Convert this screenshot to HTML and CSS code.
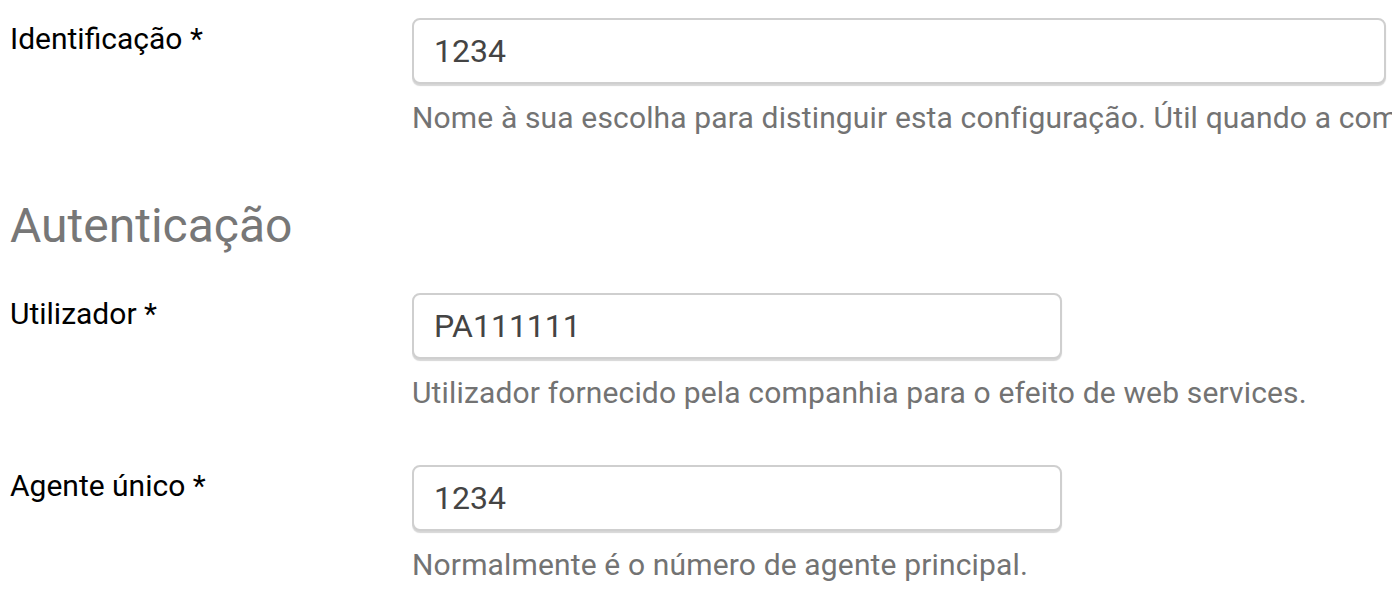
FILE: index.html
```html
<!DOCTYPE html>
<html lang="pt">
<head>
<meta charset="utf-8">
<link rel="stylesheet" href="styles.css">
</head>
<body>
<form class="form">
  <div class="row">
    <label class="label">Identificação *</label>
    <div class="field">
      <input class="input input-wide" type="text" value="1234">
      <p class="help">Nome à sua escolha para distinguir esta configuração. Útil quando a companhia tem várias configurações.</p>
    </div>
  </div>
  <h2 class="section">Autenticação</h2>
  <div class="row">
    <label class="label">Utilizador *</label>
    <div class="field">
      <input class="input" type="text" value="PA111111">
      <p class="help">Utilizador fornecido pela companhia para o efeito de web services.</p>
    </div>
  </div>
  <div class="row">
    <label class="label">Agente único *</label>
    <div class="field">
      <input class="input" type="text" value="1234">
      <p class="help">Normalmente é o número de agente principal.</p>
    </div>
  </div>
</form>
</body>
</html>
```
FILE: styles.css
```css
html, body {
  margin: 0;
  padding: 0;
  background: #fff;
  overflow: hidden;
}
body {
  font-family: Roboto, "Liberation Sans", sans-serif;
  width: 1392px;
  height: 612px;
}
.form {
  padding: 18px 0 0 10px;
}
.row {
  display: flex;
  align-items: flex-start;
  margin-bottom: 52px;
}
.label {
  width: 402px;
  flex: none;
  font-size: 30px;
  line-height: 42px;
  color: #000;
}
.field {
  flex: none;
  width: 980px;
  white-space: nowrap;
  overflow: hidden;
}
.input {
  display: block;
  box-sizing: border-box;
  width: 650px;
  height: 66px;
  margin-bottom: 2px;
  padding: 0 20px;
  border: 2px solid #cfcfcf;
  border-radius: 8px;
  box-shadow: 0 2px 1px #d6d6d6;
  font-family: Roboto, "Liberation Sans", sans-serif;
  font-size: 32px;
  color: #444;
  background: #fff;
  outline: none;
}
.input-wide {
  width: 974px;
}
.help {
  margin: 14px 0 0;
  font-size: 30px;
  letter-spacing: 0.15px;
  line-height: 40px;
  color: #737373;
}
.section {
  margin: 60px 0 39px;
  font-size: 48px;
  font-weight: 400;
  line-height: 56px;
  color: #777;
}
```
